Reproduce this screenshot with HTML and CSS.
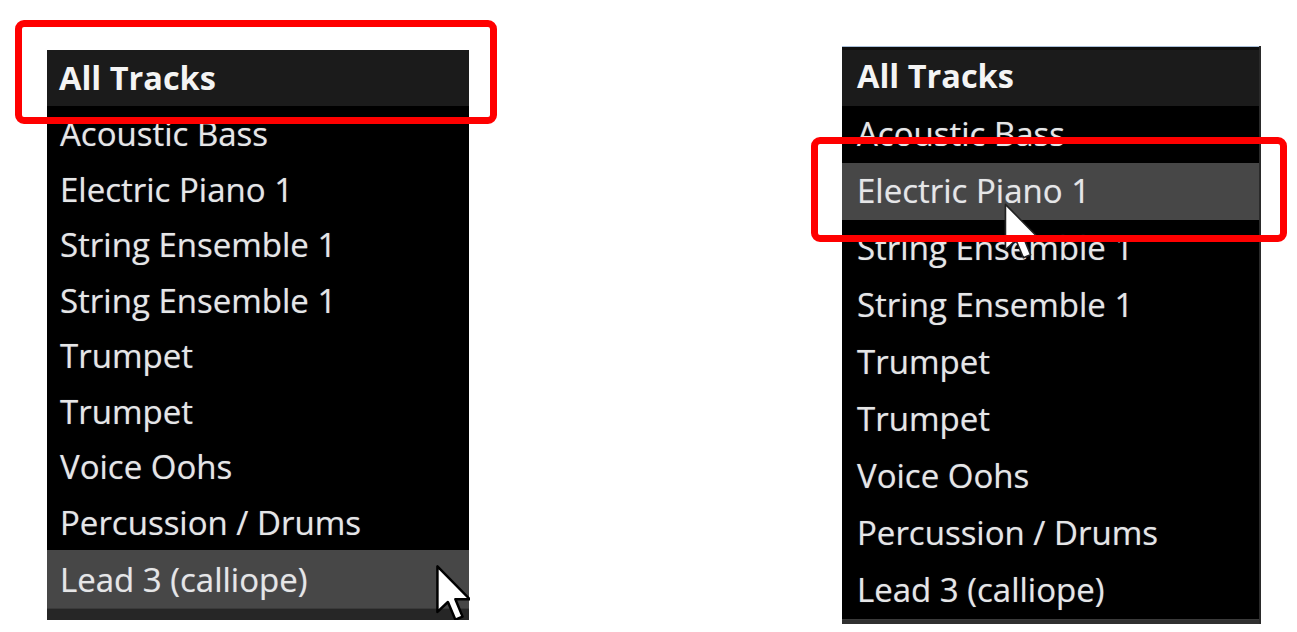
FILE: index.html
```html
<!DOCTYPE html>
<html>
<head>
<meta charset="utf-8">
<link rel="stylesheet" href="styles.css">
</head>
<body>
<div class="stage">
  <div class="panel panel-left">
    <div class="head">All Tracks</div>
    <ul class="list">
      <li>Acoustic Bass</li>
      <li>Electric Piano 1</li>
      <li>String Ensemble 1</li>
      <li>String Ensemble 1</li>
      <li>Trumpet</li>
      <li>Trumpet</li>
      <li>Voice Oohs</li>
      <li>Percussion / Drums</li>
      <li class="hover">Lead 3 (calliope)</li>
    </ul>
    <div class="foot"></div>
    <svg class="cursor cursor-left" viewBox="0 0 13 21" width="36" height="58"><path d="M0.5 0.5 L0.5 17 L4.3 13.4 L7 19.8 L9.6 18.7 L7 12.4 L12.2 12.4 Z" fill="#fff" stroke="#000" stroke-width="0.9" stroke-linejoin="round"/></svg>
    <div class="mark mark-left"></div>
  </div>
  <div class="panel panel-right">
    <div class="topline"></div>
    <div class="head">All Tracks</div>
    <ul class="list">
      <li>Acoustic Bass</li>
      <li class="hover">Electric Piano 1</li>
      <li>String Ensemble 1</li>
      <li>String Ensemble 1</li>
      <li>Trumpet</li>
      <li>Trumpet</li>
      <li>Voice Oohs</li>
      <li>Percussion / Drums</li>
      <li>Lead 3 (calliope)</li>
    </ul>
    <div class="foot"></div>
    <svg class="cursor cursor-right" viewBox="0 0 13 21" width="36" height="58"><path d="M0.5 0.5 L0.5 17 L4.3 13.4 L7 19.8 L9.6 18.7 L7 12.4 L12.2 12.4 Z" fill="#fff" stroke="#222" stroke-width="0.6" stroke-linejoin="round"/></svg>
    <div class="mark mark-right"></div>
  </div>
</div>
</body>
</html>
```
FILE: styles.css
```css
html, body {
  margin: 0;
  padding: 0;
  background: #ffffff;
}
body {
  width: 1297px;
  height: 632px;
  overflow: hidden;
  font-family: "Open Sans", "Noto Sans", sans-serif;
}
.stage {
  display: flex;
  align-items: flex-start;
  padding-left: 47px;
  gap: 373px;
}
.panel {
  position: relative;
  background: #000;
  display: flex;
  flex-direction: column;
  color: #ebebeb;
}
.panel-left {
  margin-top: 50px;
  width: 422px;
  height: 570px;
  clip-path: inset(-40px -40px 0 -40px);
}
.panel-right {
  margin-top: 46px;
  width: 419px;
  height: 578px;
  border-right: 2px solid #2a2a2a;
  box-sizing: border-box;
}
.topline {
  height: 1px;
  background: #a9bfd9;
  flex: none;
}
.panel-right .head {
  border-top: 3px solid #0e0e0e;
  height: 59px;
  padding-left: 15px;
  padding-bottom: 3px;
  box-sizing: border-box;
}
.head {
  flex: none;
  height: 56px;
  background: #1b1b1b;
  font-weight: 700;
  font-size: 32.5px;
  line-height: 1;
  display: flex;
  align-items: center;
  padding-left: 12px;
  color: #f4f4f4;
}
.list {
  list-style: none;
  margin: 0;
  padding: 0;
  flex: none;
}
.list li {
  height: 55.5px;
  display: flex;
  align-items: center;
  padding-left: 13px;
  font-size: 33px;
  color: #e6e6e6;
  text-shadow: 0 0 1px rgba(200, 220, 255, 0.5);
}
.panel-right .list li {
  height: 57px;
  padding-left: 15px;
  padding-bottom: 3px;
  box-sizing: border-box;
}
.list li.hover {
  background: #474747;
}
.panel-left .list li.hover {
  height: 58px;
}
.foot {
  flex: 1;
  background: #262626;
  border-top: 1px solid #3a3a3a;
}
.panel-right .foot {
  background: #303030;
}
.cursor {
  position: absolute;
  display: block;
}
.cursor-left {
  left: 389px;
  top: 515px;
  clip-path: inset(0 2px 0 0);
}
.cursor-right {
  left: 162px;
  top: 157px;
}
.mark {
  position: absolute;
  border: 7px solid #ff0000;
  border-radius: 9px;
  box-sizing: border-box;
}
.mark-left {
  left: -32px;
  top: -30px;
  width: 482px;
  height: 104px;
}
.mark-right {
  left: -31px;
  top: 91px;
  width: 476px;
  height: 105px;
}
```
